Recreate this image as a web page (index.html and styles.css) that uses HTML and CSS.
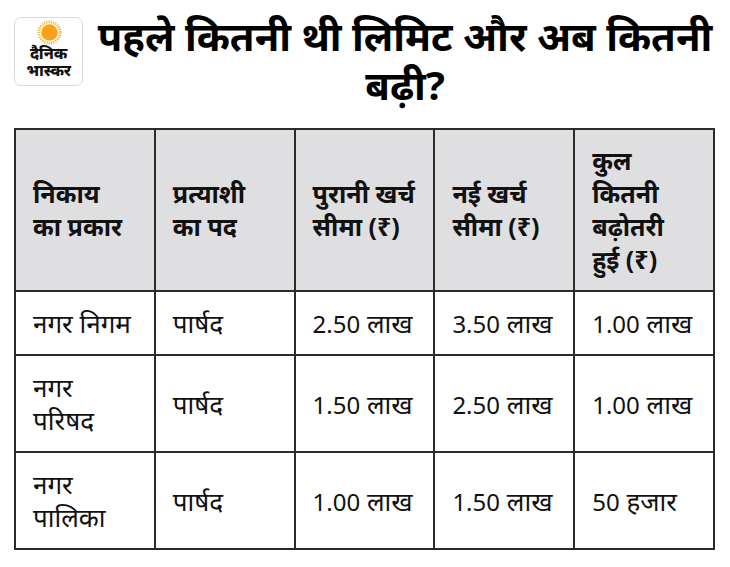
FILE: index.html
```html
<!DOCTYPE html>
<html lang="hi">
<head>
<meta charset="utf-8">
<link rel="stylesheet" href="styles.css">
</head>
<body>
<div class="page">
  <header class="head">
    <div class="logo">
      <svg class="sun" width="25" height="25" viewBox="0 0 26 26">
        <circle cx="13" cy="13" r="11" fill="none" stroke="#f9b233" stroke-width="3" stroke-dasharray="1.2 1.2"/>
        <circle cx="13" cy="13" r="8.5" fill="#f7a11a"/>
      </svg>
      <div class="logo-text">दैनिक</div>
      <div class="logo-text">भास्कर</div>
    </div>
    <h1 class="title">पहले कितनी थी लिमिट और अब कितनी बढ़ी?</h1>
  </header>
  <table class="grid">
    <thead>
      <tr>
        <th>निकाय<br>का प्रकार</th>
        <th>प्रत्याशी<br>का पद</th>
        <th>पुरानी खर्च<br>सीमा (₹)</th>
        <th>नई खर्च<br>सीमा (₹)</th>
        <th>कुल<br>कितनी<br>बढ़ोतरी<br>हुई (₹)</th>
      </tr>
    </thead>
    <tbody>
      <tr>
        <td>नगर निगम</td>
        <td>पार्षद</td>
        <td><span class="num">2.50</span> लाख</td>
        <td><span class="num">3.50</span> लाख</td>
        <td><span class="num">1.00</span> लाख</td>
      </tr>
      <tr>
        <td>नगर<br>परिषद</td>
        <td>पार्षद</td>
        <td><span class="num">1.50</span> लाख</td>
        <td><span class="num">2.50</span> लाख</td>
        <td><span class="num">1.00</span> लाख</td>
      </tr>
      <tr>
        <td>नगर<br>पालिका</td>
        <td>पार्षद</td>
        <td><span class="num">1.00</span> लाख</td>
        <td><span class="num">1.50</span> लाख</td>
        <td><span class="num">50</span> हजार</td>
      </tr>
    </tbody>
  </table>
</div>
</body>
</html>
```
FILE: styles.css
```css
html, body {
  margin: 0;
  padding: 0;
  background: #ffffff;
}
body {
  font-family: "Noto Sans", "Noto Sans Devanagari", "Open Sans", sans-serif;
  color: #111111;
}
.page {
  padding: 17px 15px 0 14px;
}
.head {
  display: flex;
  align-items: flex-start;
}
.logo {
  width: 69px;
  height: 69px;
  border: 1.5px solid #d9d9d9;
  border-radius: 7px;
  box-sizing: border-box;
  display: flex;
  flex-direction: column;
  align-items: center;
  padding-top: 2px;
  flex: none;
}
.sun {
  display: block;
  margin-left: 2px;
}
.logo-text {
  font-weight: 800;
  font-size: 16px;
  line-height: 17px;
  color: #111;
  letter-spacing: -0.2px;
}
.title {
  flex: 1;
  margin: 0;
  padding-left: 12px;
  font-size: 40px;
  font-weight: 700;
  line-height: 49px;
  text-align: center;
  color: #000;
  margin-top: -6px;
}
.grid {
  margin-top: 19px;
  width: 701px;
  border-collapse: collapse;
  table-layout: fixed;
  border: 2px solid #2b2b2b;
}
.grid th,
.grid td {
  border: 2px solid #2b2b2b;
  text-align: left;
  vertical-align: middle;
  padding: 15px 17px 14px;
  font-size: 26px;
  line-height: 33px;
}
.grid th {
  background: #dfdfe1;
  font-weight: 700;
  font-size: 25px;
  padding: 14px 17px;
  line-height: 33px;
}
.grid td {
  font-weight: 400;
}
.num {
  font-size: 24px;
}
.grid tbody tr + tr td {
  border-top-color: #5a5a5a;
}
```
